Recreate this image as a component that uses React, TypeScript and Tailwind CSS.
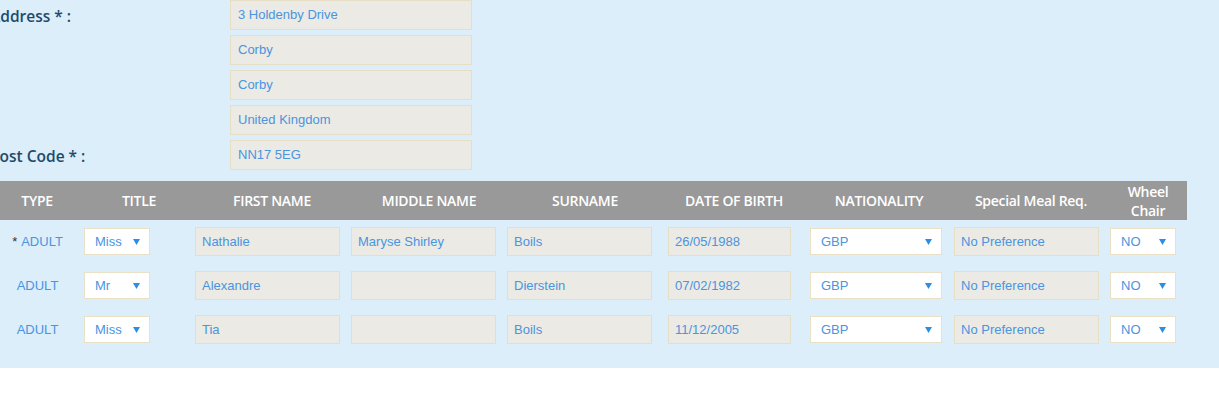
import { ReactNode } from "react";

const addressLines = ["3 Holdenby Drive", "Corby", "Corby", "United Kingdom"];

const headers = [
  { label: "TYPE", w: "w-[74px]" },
  { label: "TITLE", w: "w-[130px]" },
  { label: "FIRST NAME", w: "w-[136px]" },
  { label: "MIDDLE NAME", w: "w-[178px]" },
  { label: "SURNAME", w: "w-[134px]" },
  { label: "DATE OF BIRTH", w: "w-[164px]" },
  { label: "NATIONALITY", w: "w-[126px]" },
  { label: "Special Meal Req.", w: "w-[178px]" },
];

const passengers = [
  { lead: true, title: "Miss", first: "Nathalie", middle: "Maryse Shirley", last: "Boils", dob: "26/05/1988" },
  { lead: false, title: "Mr", first: "Alexandre", middle: "", last: "Dierstein", dob: "07/02/1982" },
  { lead: false, title: "Miss", first: "Tia", middle: "", last: "Boils", dob: "11/12/2005" },
];

function Field({ value, className }: { value: string; className: string }) {
  return (
    <div
      className={`h-[29px] flex items-center pl-[6px] bg-[#ebeae4] border border-[#e6dfc6] text-[13px] text-[#4a94e0] ${className}`}
    >
      {value}
    </div>
  );
}

function Select({ value, className }: { value: string; className: string }) {
  return (
    <div
      className={`h-[27px] flex items-center justify-between pl-[10px] pr-[9px] bg-white border border-[#e9e0c6] text-[13px] text-[#4a94e0] ${className}`}
    >
      <span>{value}</span>
      <svg width="7" height="6" viewBox="0 0 7 6">
        <path d="M0 0 H7 L3.5 6 Z" fill="#2b8ee6" />
      </svg>
    </div>
  );
}

function Label({ children }: { children: ReactNode }) {
  return (
    <div className="w-[240px] mt-[4px] text-[15.5px] font-semibold text-[#1f4a68] font-['Open_Sans',sans-serif]">
      {children}
    </div>
  );
}

export default function App() {
  return (
    <div className="w-[1219px] h-[398px] bg-white overflow-hidden font-['Liberation_Sans',Arial,sans-serif]">
      <div className="bg-[#dbeefa] pb-[24px]">
        {/* address block */}
        <div className="flex flex-col gap-[5px] -ml-[10px]">
          {addressLines.map((line, i) => (
            <div key={i} className="flex items-center h-[30px]">
              <Label>{i === 0 ? "Address * :" : ""}</Label>
              <div className="w-[242px] h-[30px] flex items-center pl-[7px] bg-[#ebeae4] border border-[#e6dfc6] text-[13px] text-[#4a94e0]">
                {line}
              </div>
            </div>
          ))}
          <div className="flex items-center h-[30px]">
            <Label>Post Code * :</Label>
            <div className="w-[242px] h-[30px] flex items-center pl-[7px] bg-[#ebeae4] border border-[#e6dfc6] text-[13px] text-[#4a94e0]">
              NN17 5EG
            </div>
          </div>
        </div>

        {/* passenger table header */}
        <div className="mt-[11px] w-[1187px] h-[39px] bg-[#999999] flex items-center text-white text-[14px] font-semibold font-['Open_Sans',sans-serif] tracking-[-0.3px]">
          {headers.map((h) => (
            <div key={h.label} className={`${h.w} text-center`}>
              {h.label}
            </div>
          ))}
          <div className="w-[56px] text-center leading-[19px]">
            Wheel
            <br />
            Chair
          </div>
        </div>

        {/* passenger rows */}
        <div className="pt-[7px] flex flex-col gap-[15px]">
          {passengers.map((p, i) => (
            <div key={i} className="flex items-center h-[29px]">
              <div className="w-[75px] text-center text-[13px] text-[#4a94e0]">
                {p.lead && <span className="text-[#333] mr-[4px]">*</span>}
                ADULT
              </div>
              <Select value={p.title} className="w-[66px] ml-[9px]" />
              <Field value={p.first} className="w-[145px] ml-[45px]" />
              <Field value={p.middle} className="w-[145px] ml-[11px]" />
              <Field value={p.last} className="w-[145px] ml-[11px]" />
              <Field value={p.dob} className="w-[123px] ml-[16px]" />
              <Select value="GBP" className="w-[132px] ml-[19px]" />
              <Field value="No Preference" className="w-[145px] ml-[12px]" />
              <Select value="NO" className="w-[66px] ml-[11px]" />
            </div>
          ))}
        </div>
      </div>
    </div>
  );
}
